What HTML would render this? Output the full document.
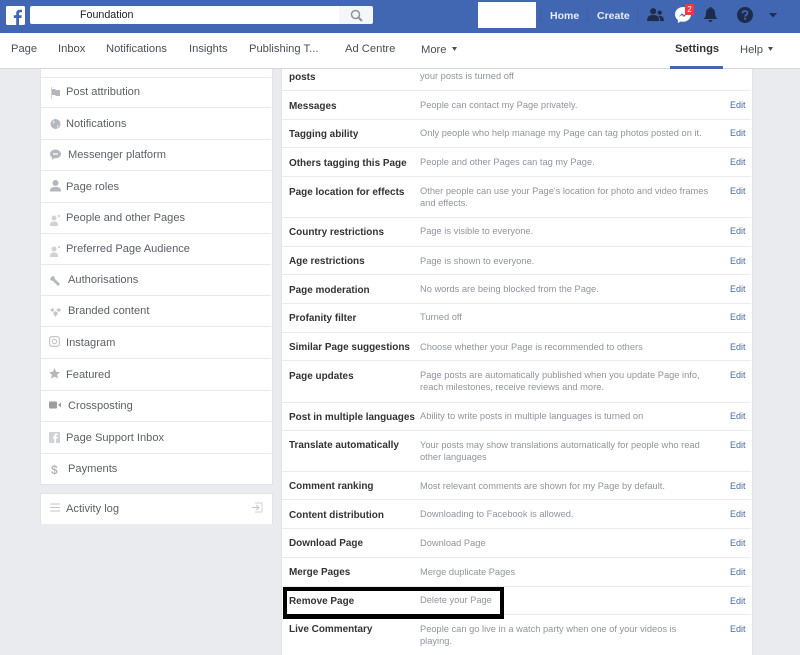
<!DOCTYPE html>
<html><head><meta charset="utf-8"><style>
html,body{margin:0;padding:0;width:800px;height:655px;overflow:hidden}
body{position:relative;background:#e9ebee;font-family:"Liberation Sans",sans-serif}
#w{position:absolute;left:0;top:0;width:800px;height:655px;overflow:hidden;filter:blur(.3px)}
.a{position:absolute;white-space:nowrap}
.bar{left:0;top:0;width:800px;height:33px;background:#4267b2}
.nav{left:0;top:33px;width:800px;height:35px;background:#fff;border-bottom:1px solid #d5d7da}
.n{font-size:11.2px;color:#4b4f56;top:42px;line-height:14px}
.hb{font-size:10.5px;font-weight:bold;color:#e8edf6;line-height:12px;top:10px}
.panel{background:#fff;border:1px solid #e1e3e6;box-sizing:border-box}
.s{left:41px;width:230px;height:1px;background:#e6e8eb}
.st{font-size:11.1px;color:#5c6068;line-height:14px;margin-top:1px}
.t{left:282px;width:469px;height:1px;background:#e9ebee}
.l{left:289px;font-size:9.95px;font-weight:bold;color:#333;line-height:12px;margin-top:2px}
.z{margin-top:1px}
.d{left:420px;font-size:9.3px;color:#90949c;line-height:12px}
.e{left:730px;font-size:9px;color:#4b6a9e;line-height:12px}
svg{position:absolute;overflow:visible}
</style></head><body><div id="w">
<div class="a bar"></div>
<svg style="left:6px;top:6px" width="19" height="19" viewBox="0 0 19 19"><rect width="19" height="19" rx="1.5" fill="#fff"/><path d="M13 19v-7h2.400l.4-2.800H13V7.600c0-.8.3-1.300 1.400-1.300H16V3.800c-.4 0-1.200-.1-2.200-.1-2.200 0-3.600 1.300-3.600 3.700v1.800H7.800V12h2.400v7z" fill="#4267b2"/></svg>
<div class="a" style="left:30px;top:6px;width:314px;height:18px;background:#fff;border-radius:2px 0 0 2px"></div>
<div class="a" style="left:339px;top:6px;width:34px;height:18px;background:#f5f6f7;border-radius:0 2px 2px 0"></div>
<div class="a" style="left:80px;top:9px;font-size:10.7px;color:#1d2129;line-height:13px">Foundation</div>
<svg style="left:350px;top:9px" width="13" height="13" viewBox="0 0 13 13"><circle cx="5.500" cy="5.500" r="4" fill="none" stroke="#8d949e" stroke-width="1.500"/><path d="M8.500 8.500L12 12" stroke="#8d949e" stroke-width="2"/></svg>
<div class="a" style="left:478px;top:2px;width:58px;height:26px;background:#fff"></div>
<div class="a hb" style="left:550px">Home</div>
<div class="a hb" style="left:597px">Create</div>
<div class="a" style="left:540px;top:8px;width:1px;height:14px;background:#3f5f9f"></div>
<div class="a" style="left:587px;top:8px;width:1px;height:14px;background:#3f5f9f"></div>
<div class="a" style="left:637px;top:8px;width:1px;height:14px;background:#3f5f9f"></div>
<svg style="left:647px;top:8px" width="17" height="14" viewBox="0 0 18 15"><circle cx="6.500" cy="3.500" r="3.300" fill="#1d2c4c"/><path d="M0 14c0-5 2-6.500 6.500-6.500S13 9 13 14z" fill="#1d2c4c"/><circle cx="13.500" cy="5" r="2.300" fill="#1d2c4c"/><path d="M14 14h4c0-4-1.500-5.500-4.500-5.500-.5 0-1 0-1.300.2C13.500 10 14 11.500 14 14z" fill="#1d2c4c"/></svg>
<svg style="left:675px;top:7px" width="16" height="16" viewBox="0 0 16 16"><path d="M8 0C3.600 0 0 3.300 0 7.400c0 2.300 1.100 4.300 2.900 5.700V16l2.700-1.500c.8.200 1.600.3 2.400.3 4.400 0 8-3.300 8-7.400S12.400 0 8 0z" fill="#fff"/><path d="M3.500 10L7 6.200l2 1.900 3.500-1.900L9 10 7 8z" fill="#4267b2"/></svg>
<div class="a" style="left:685px;top:4px;width:9px;height:11px;background:#f0383e;border-radius:1px;color:#fff;font-size:8px;line-height:11px;text-align:center">2</div>
<svg style="left:703px;top:7px" width="15" height="15" viewBox="0 0 15 15"><path d="M7.500 0c.8 0 1.200.5 1.200 1.100C11 1.700 12 3.600 12 6c0 3 1 4.500 2.500 6H.5C2 10.500 3 9 3 6c0-2.400 1-4.300 3.300-4.900C6.300.5 6.700 0 7.500 0z" fill="#1d2c4c"/><path d="M5.500 13h4c0 1-.9 2-2 2s-2-1-2-2z" fill="#1d2c4c"/></svg>
<svg style="left:737px;top:7px" width="16" height="16" viewBox="0 0 16 16"><circle cx="8" cy="8" r="8" fill="#1d2c4c"/><path d="M5.500 6.200C5.500 4.700 6.600 4 8 4s2.500.8 2.500 2.100c0 1.800-2.400 1.900-2.400 3.500" fill="none" stroke="#4267b2" stroke-width="1.800"/><rect x="7.100" y="10.700" width="2" height="2" fill="#4267b2"/></svg>
<svg style="left:769px;top:13px" width="8" height="5" viewBox="0 0 10 6"><path d="M0 0h10L5 5.500z" fill="#1d2c4c"/></svg>

<div class="a nav"></div>
<div class="a n" style="left:11px">Page</div>
<div class="a n" style="left:58px">Inbox</div>
<div class="a n" style="left:106px">Notifications</div>
<div class="a n" style="left:189px">Insights</div>
<div class="a n" style="left:249px">Publishing T...</div>
<div class="a n" style="left:345px">Ad Centre</div>
<div class="a n" style="left:421px;top:43px">More</div>
<svg style="left:452px;top:47px" width="5" height="4" viewBox="0 0 5 4"><path d="M0 0h5L2.500 4z" fill="#4b4f56"/></svg>
<div class="a n" style="left:675px;font-weight:bold;color:#333">Settings</div>
<div class="a n" style="left:740px;top:43px">Help</div>
<svg style="left:768px;top:47px" width="5" height="4" viewBox="0 0 5 4"><path d="M0 0h5L2.500 4z" fill="#4b4f56"/></svg>
<div class="a" style="left:670px;top:66px;width:53px;height:3px;background:#4267b2"></div>

<div class="a panel" style="left:40px;top:69px;width:233px;height:416px;border-top:0"></div>
<div class="a panel" style="left:40px;top:493px;width:233px;height:31px;border-bottom:0"></div>
<div class="a s" style="top:77px"></div><div class="a s" style="top:107px"></div><div class="a s" style="top:139px"></div><div class="a s" style="top:170px"></div><div class="a s" style="top:202px"></div><div class="a s" style="top:233px"></div><div class="a s" style="top:264px"></div><div class="a s" style="top:295px"></div><div class="a s" style="top:326px"></div><div class="a s" style="top:358px"></div><div class="a s" style="top:390px"></div><div class="a s" style="top:421px"></div><div class="a s" style="top:453px"></div>

<div class="a st" style="left:66px;top:84px">Post attribution</div>
<div class="a st" style="left:66px;top:116px">Notifications</div>
<div class="a st" style="left:68px;top:147px">Messenger platform</div>
<div class="a st" style="left:66px;top:179px">Page roles</div>
<div class="a st" style="left:66px;top:210px">People and other Pages</div>
<div class="a st" style="left:66px;top:241px">Preferred Page Audience</div>
<div class="a st" style="left:68px;top:272px">Authorisations</div>
<div class="a st" style="left:68px;top:303px">Branded content</div>
<div class="a st" style="left:66px;top:335px">Instagram</div>
<div class="a st" style="left:66px;top:367px">Featured</div>
<div class="a st" style="left:68px;top:398px">Crossposting</div>
<div class="a st" style="left:66px;top:430px">Page Support Inbox</div>
<div class="a st" style="left:68px;top:461px">Payments</div>
<div class="a st" style="left:66px;top:501px">Activity log</div>

<svg style="left:50px;top:86px" width="11" height="14" viewBox="0 0 11 14"><path d="M1 1h1v12H1z" fill="#d0d2d5"/><path d="M2 3h3l1 1h4v6H6L5 9H2z" fill="#b4b7bb"/></svg>
<svg style="left:50px;top:118px" width="11" height="12" viewBox="0 0 11 12"><circle cx="5.500" cy="6" r="5" fill="#b4b7bb"/><path d="M3 2l2 2-2 2zM7 7l2 1-2 2z" fill="#e4e5e7"/></svg>
<svg style="left:50px;top:149px" width="11" height="11" viewBox="0 0 11 11"><path d="M5.500 .5C2.500.5 0 2.500 0 5c0 1.500.8 2.700 2 3.500V11l2.200-1.700h1.300c3 0 5.500-2 5.500-4.300S8.500.5 5.500.5z" fill="#b4b7bb"/><rect x="3" y="4" width="5" height="2" fill="#e4e5e7"/></svg>
<svg style="left:50px;top:180px" width="11" height="12" viewBox="0 0 11 12"><circle cx="5.500" cy="3" r="3" fill="#b4b7bb"/><path d="M0 11.500c0-3.500 1.500-4.500 5.500-4.500s5.500 1 5.500 4.500z" fill="#b4b7bb"/></svg>
<svg style="left:50px;top:214px" width="11" height="12" viewBox="0 0 11 12"><circle cx="4" cy="4" r="2.500" fill="#d0d2d5"/><path d="M0 12c0-3.500 1-4.500 4-4.500s4 1 4 4.500z" fill="#d0d2d5"/><circle cx="9" cy="2" r="1.200" fill="#d0d2d5"/></svg>
<svg style="left:50px;top:245px" width="11" height="12" viewBox="0 0 11 12"><circle cx="4" cy="4" r="2.500" fill="#d0d2d5"/><path d="M0 12c0-3.500 1-4.500 4-4.500s4 1 4 4.500z" fill="#d0d2d5"/><circle cx="9" cy="2" r="1.200" fill="#d0d2d5"/></svg>
<svg style="left:50px;top:276px" width="10" height="10" viewBox="0 0 10 10"><path d="M1 1l3-1 1 3 5 5-2 2-5-5-3-1z" fill="#b4b7bb"/></svg>
<svg style="left:50px;top:307px" width="11" height="10" viewBox="0 0 11 10"><path d="M0 3l2.500-2 2 2-2 2zM6 3l3-2 2 2-2 2zM3 6l2.500-2L8 6 5.500 10z" fill="#c4c6ca"/></svg>
<svg style="left:49px;top:336px" width="11" height="11" viewBox="0 0 11 11"><rect x=".6" y=".6" width="9.800" height="9.800" rx="2.500" fill="none" stroke="#c4c6ca" stroke-width="1.200"/><circle cx="5.500" cy="5.500" r="2.200" fill="none" stroke="#c4c6ca" stroke-width="1.100"/></svg>
<svg style="left:49px;top:368px" width="11" height="11" viewBox="0 0 11 11"><path d="M5.500 0l1.600 3.700 3.900.4-2.900 2.600.8 3.900-3.400-2-3.400 2 .8-3.900L0 4.100l3.900-.4z" fill="#b4b7bb"/></svg>
<svg style="left:49px;top:401px" width="12" height="8" viewBox="0 0 12 8"><rect width="8" height="7" y=".5" rx="1" fill="#9a9da1"/><path d="M9 4l3-2.500v5z" fill="#9a9da1"/></svg>
<svg style="left:49px;top:432px" width="11" height="11" viewBox="0 0 11 11"><rect width="11" height="11" rx="1" fill="#d0d2d5"/><path d="M7 11V6.500h1.500l.2-1.700H7v-1c0-.5.200-.8.800-.8h.9V1.500H7.500C6 1.500 5.200 2.400 5.200 3.700v1.100H4v1.700h1.200V11z" fill="#fff"/></svg>
<div class="a" style="left:51px;top:463px;font-size:12px;line-height:14px;color:#b4b7bb;font-weight:bold">$</div>
<svg style="left:50px;top:503px" width="10" height="9" viewBox="0 0 10 9"><path d="M0 1h10M0 4.500h10M0 8h10" stroke="#c4c6ca" stroke-width="1"/></svg>
<svg style="left:252px;top:502px" width="11" height="11" viewBox="0 0 11 11"><path d="M3 1h7v9H3" fill="none" stroke="#d0d2d5"/><path d="M0 5.500h6M4 3l3 2.500L4 8" fill="none" stroke="#c4c6ca"/></svg>

<div class="a panel" style="left:281px;top:69px;width:472px;height:586px;border-top:0;border-bottom:0"></div>
<div class="a t" style="top:90px"></div><div class="a t" style="top:119px"></div><div class="a t" style="top:147px"></div><div class="a t" style="top:176px"></div><div class="a t" style="top:217px"></div><div class="a t" style="top:246px"></div><div class="a t" style="top:274px"></div><div class="a t" style="top:303px"></div><div class="a t" style="top:332px"></div><div class="a t" style="top:360px"></div><div class="a t" style="top:402px"></div><div class="a t" style="top:430px"></div><div class="a t" style="top:471px"></div><div class="a t" style="top:499px"></div><div class="a t" style="top:528px"></div><div class="a t" style="top:557px"></div><div class="a t" style="top:586px"></div><div class="a t" style="top:614px"></div>

<div class="a l" style="top:70px">posts</div><div class="a d" style="top:70px">your posts is turned off</div>
<div class="a l" style="top:99px">Messages</div><div class="a d" style="top:99px">People can contact my Page privately.</div><div class="a e" style="top:99px">Edit</div>
<div class="a l" style="top:127px">Tagging ability</div><div class="a d" style="top:127px">Only people who help manage my Page can tag photos posted on it.</div><div class="a e" style="top:127px">Edit</div>
<div class="a l" style="top:156px">Others tagging this Page</div><div class="a d" style="top:156px">People and other Pages can tag my Page.</div><div class="a e" style="top:156px">Edit</div>
<div class="a l" style="top:185px">Page location for effects</div><div class="a d" style="top:185px">Other people can use your Page's location for photo and video frames</div><div class="a d" style="top:197px">and effects.</div><div class="a e" style="top:185px">Edit</div>
<div class="a l" style="top:225px">Country restrictions</div><div class="a d" style="top:225px">Page is visible to everyone.</div><div class="a e" style="top:225px">Edit</div>
<div class="a l z" style="top:255px">Age restrictions</div><div class="a d" style="top:255px">Page is shown to everyone.</div><div class="a e" style="top:255px">Edit</div>
<div class="a l" style="top:283px">Page moderation</div><div class="a d" style="top:283px">No words are being blocked from the Page.</div><div class="a e" style="top:283px">Edit</div>
<div class="a l" style="top:311px">Profanity filter</div><div class="a d" style="top:311px">Turned off</div><div class="a e" style="top:311px">Edit</div>
<div class="a l" style="top:340px">Similar Page suggestions</div><div class="a d" style="top:341px">Choose whether your Page is recommended to others</div><div class="a e" style="top:341px">Edit</div>
<div class="a l" style="top:369px">Page updates</div><div class="a d" style="top:369px">Page posts are automatically published when you update Page info,</div><div class="a d" style="top:381px">reach milestones, receive reviews and more.</div><div class="a e" style="top:369px">Edit</div>
<div class="a l" style="top:410px">Post in multiple languages</div><div class="a d" style="top:410px">Ability to write posts in multiple languages is turned on</div><div class="a e" style="top:410px">Edit</div>
<div class="a l z" style="top:439px">Translate automatically</div><div class="a d" style="top:439px">Your posts may show translations automatically for people who read</div><div class="a d" style="top:451px">other languages</div><div class="a e" style="top:439px">Edit</div>
<div class="a l z" style="top:480px">Comment ranking</div><div class="a d" style="top:480px">Most relevant comments are shown for my Page by default.</div><div class="a e" style="top:480px">Edit</div>
<div class="a l" style="top:508px">Content distribution</div><div class="a d" style="top:508px">Downloading to Facebook is allowed.</div><div class="a e" style="top:508px">Edit</div>
<div class="a l z" style="top:537px">Download Page</div><div class="a d" style="top:537px">Download Page</div><div class="a e" style="top:537px">Edit</div>
<div class="a l z" style="top:566px">Merge Pages</div><div class="a d" style="top:566px">Merge duplicate Pages</div><div class="a e" style="top:566px">Edit</div>
<div class="a l" style="top:594px">Remove Page</div><div class="a d" style="top:594px">Delete your Page</div><div class="a e" style="top:595px">Edit</div>
<div class="a l z" style="top:623px">Live Commentary</div><div class="a d" style="top:623px">People can go live in a watch party when one of your videos is</div><div class="a d" style="top:635px">playing.</div><div class="a e" style="top:623px">Edit</div>

<div class="a" style="left:283px;top:587px;width:221px;height:32px;box-sizing:border-box;border:4px solid #000;border-bottom-width:5px"></div>
</div></body></html>
